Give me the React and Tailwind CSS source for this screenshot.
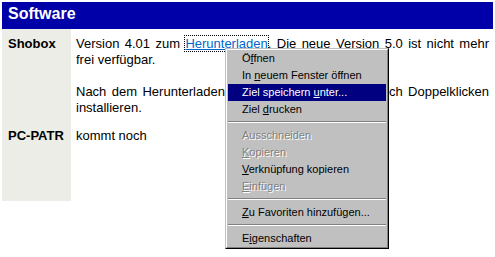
import React from 'react';

const menuItems = [
  { text: 'Öffnen', u: 1 },
  { text: 'In neuem Fenster öffnen', u: 3 },
  { text: 'Ziel speichern unter...', u: 15, active: true },
  { text: 'Ziel drucken', u: 5 },
  'sep',
  { text: 'Ausschneiden', disabled: true },
  { text: 'Kopieren', u: 0, disabled: true },
  { text: 'Verknüpfung kopieren', u: 0 },
  { text: 'Einfügen', u: 0, disabled: true },
  'sep',
  { text: 'Zu Favoriten hinzufügen...', u: 0 },
  'sep',
  { text: 'Eigenschaften', u: 1 }
];

const Label = ({ text, u }) => {
  if (u === undefined) return text;
  return (
    <>
      {text.slice(0, u)}
      <span className="underline underline-offset-[1px]">{text[u]}</span>
      {text.slice(u + 1)}
    </>
  );
};

const ContextMenu = () => (
  <div className="absolute left-[225px] top-[48px] w-[164px] border border-t-[#c0c0c0] border-l-[#c0c0c0] border-r-black border-b-black">
    <div className="bg-[#c0c0c0] border border-t-white border-l-white border-r-[#808080] border-b-[#808080] px-[1px] text-[11px] text-black">
      {menuItems.map((item, i) =>
        item === 'sep' ? (
          <div key={i} className="h-[9px] pt-[3px]">
            <div className="border-t border-t-[#808080] border-b border-b-white"></div>
          </div>
        ) : (
          <div
            key={i}
            className={`h-[17px] leading-[17px] pl-[14px] whitespace-nowrap ${
              item.active
                ? 'bg-[#000080] text-white'
                : item.disabled
                ? 'text-[#808080] [text-shadow:1px_1px_0_#ffffff]'
                : ''
            }`}
          >
            <Label text={item.text} u={item.u} />
          </div>
        )
      )}
    </div>
  </div>
);

export default function App() {
  return (
    <div className="relative w-[495px] h-[257px] bg-white p-[2px] font-['Liberation_Sans',Arial,sans-serif] text-black overflow-hidden">
      <div className="w-[491px]">
        <div className="h-[27px] bg-[#0000a8] pl-[6px] pt-[3px] text-[16px] leading-[18px] font-bold text-white">
          Software
        </div>

        <div className="flex">
          <div className="w-[69px] bg-[#ededE7] pl-[6px] pt-[7px] pb-[5px] text-[13px] leading-[16px] font-bold">
            Shobox
          </div>
          <div className="flex-1 pl-[5px] pr-[4px] pt-[7px] pb-[5px] text-[13px] leading-[16px] text-justify">
            <p>
              Version 4.01 zum{' '}
              <a href="#" className="text-[#0066cc] underline outline-1 outline-dotted outline-black">
                Herunterladen
              </a>
              . Die neue Version 5.0 ist nicht mehr frei verfügbar.
            </p>
            <p className="mt-[16px]">
              Nach dem Herunterladen das Programm einfach durch Doppelklicken installieren.
            </p>
          </div>
        </div>

        <div className="flex">
          <div className="w-[69px] h-[80px] bg-[#ededE7] pl-[6px] pt-[7px] text-[13px] leading-[16px] font-bold">
            PC-PATR
          </div>
          <div className="flex-1 pl-[5px] pt-[7px] text-[13px] leading-[16px]">kommt noch</div>
        </div>
      </div>

      <ContextMenu />
    </div>
  );
}
